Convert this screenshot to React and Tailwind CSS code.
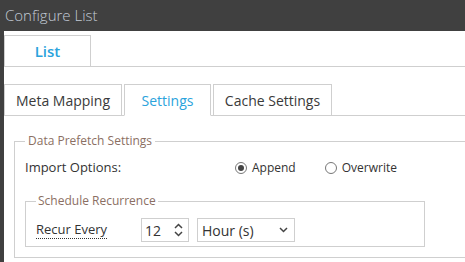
import { useState } from "react";

const font = { fontFamily: '"Open Sans", "Noto Sans", sans-serif' };

const Radio = ({ checked, label, onClick }) => (
  <button type="button" onClick={onClick} className="flex items-center gap-[5px] text-[12px] text-[#333]">
    <span className="flex h-[12px] w-[12px] items-center justify-center rounded-full border border-[#777] bg-white">
      {checked && <span className="h-[6px] w-[6px] rounded-full bg-[#444]" />}
    </span>
    {label}
  </button>
);

const App = () => {
  const [tab, setTab] = useState("Settings");
  const [mode, setMode] = useState("append");
  const tabs = [
    { name: "Meta Mapping", w: "w-[118px]" },
    { name: "Settings", w: "w-[87px]" },
    { name: "Cache Settings", w: "w-[119px]" },
  ];

  return (
    <div style={font} className="flex h-[262px] w-[465px] flex-col overflow-hidden bg-[#404040]">
      <div className="h-[31px] px-[5px] text-[15px] font-light leading-[31px] text-[#c3cbd6]">
        Configure List
      </div>

      <div className="ml-[4px] flex-1 overflow-hidden bg-white">
        <div className="flex border-b border-[#cfcfcf] pt-[4px]">
          <div className="flex h-[31px] w-[87px] items-center justify-center border border-b-0 border-[#cfcfcf] text-[15px] font-semibold text-[#2aa3dc]">
            List
          </div>
        </div>

        <div className="mt-[17px] flex gap-[2px] border-b border-[#cfcfcf]">
          {tabs.map((t) => (
            <button
              key={t.name}
              type="button"
              onClick={() => setTab(t.name)}
              className={`-mb-px flex h-[32px] shrink-0 items-center justify-center border border-[#cfcfcf] text-[14px] ${t.w} ${
                tab === t.name ? "border-b-white text-[#2aa3dc]" : "text-[#3a3a3a]"
              }`}
            >
              {t.name}
            </button>
          ))}
        </div>

        <fieldset className="ml-[10px] mr-[-20px] mt-[16px] border border-[#cfcfcf] px-[10px] pb-[10px]">
          <legend className="px-[3px] text-[12px] text-[#8b6f63]">Data Prefetch Settings</legend>

          <div className="flex h-[30px] items-center pt-[6px] text-[13px] text-[#333]">
            <span className="w-[210px]">Import Options:</span>
            <div className="flex gap-[29px]">
              <Radio checked={mode === "append"} label="Append" onClick={() => setMode("append")} />
              <Radio checked={mode === "overwrite"} label="Overwrite" onClick={() => setMode("overwrite")} />
            </div>
          </div>

          <fieldset className="mt-[12px] w-[400px] border border-[#cfcfcf] px-[10px] pb-[4px]">
            <legend className="px-[2px] text-[12px] text-[#8b6f63]">Schedule Recurrence</legend>
            <div className="flex items-center pt-[8px] text-[13px] text-[#333]">
              <span className="w-[105px]">
                <span className="border-b border-dotted border-[#333] leading-[18px]">Recur Every</span>
              </span>
              <div className="flex h-[24px] w-[48px] items-center justify-between border border-[#cfcfcf] pl-[3px] pr-[5px] text-[14px]">
                <span>12</span>
                <svg width="9" height="14" viewBox="0 0 9 14" fill="none" stroke="#444" strokeWidth="1.5">
                  <path d="M1 5 L4.5 1.5 L8 5" />
                  <path d="M1 9 L4.5 12.5 L8 9" />
                </svg>
              </div>
              <div className="ml-[8px] flex h-[24px] w-[98px] items-center justify-between border border-[#cfcfcf] pl-[4px] pr-[6px] text-[14px]">
                <span>Hour (s)</span>
                <svg width="9" height="6" viewBox="0 0 9 6" fill="none" stroke="#444" strokeWidth="1.5">
                  <path d="M1 1 L4.5 4.5 L8 1" />
                </svg>
              </div>
            </div>
          </fieldset>
        </fieldset>
      </div>
    </div>
  );
};

export default App;
